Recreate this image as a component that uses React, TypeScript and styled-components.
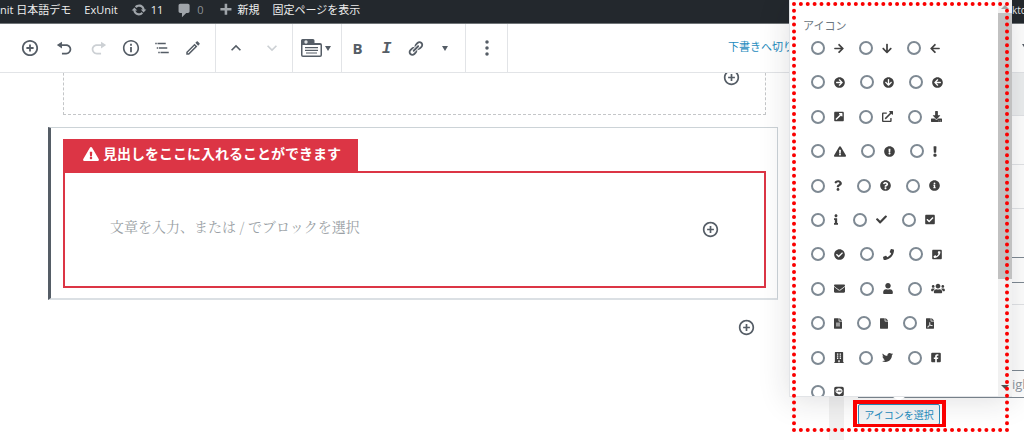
import React from "react";
import styled, { createGlobalStyle } from "styled-components";
import type { IconType } from "react-icons";
import {
  FaArrowRight, FaArrowDown, FaArrowLeft,
  FaArrowCircleRight, FaArrowCircleDown, FaArrowCircleLeft,
  FaExternalLinkSquareAlt, FaExternalLinkAlt, FaDownload,
  FaExclamationTriangle, FaExclamationCircle, FaExclamation,
  FaQuestion, FaQuestionCircle, FaInfoCircle,
  FaInfo, FaCheck, FaCheckSquare,
  FaCheckCircle, FaPhone, FaPhoneSquare,
  FaEnvelope, FaUser, FaUsers,
  FaFileAlt, FaFile, FaFilePdf,
  FaBuilding, FaTwitter, FaFacebookSquare,
  FaLine,
} from "react-icons/fa";

const GlobalStyle = createGlobalStyle`
  *, *::before, *::after { box-sizing: border-box; }
  body {
    margin: 0;
    background: #fff;
    color: #555d66;
    font-family: "Open Sans", "Noto Sans CJK JP", sans-serif;
    font-size: 11px;
    line-height: 16px;
  }
  button, input { font: inherit; color: inherit; }
  svg { display: block; flex: none; }
`;

const Page = styled.div`
  position: relative;
  display: flex;
  flex-direction: column;
  min-height: 100vh;
  overflow: hidden;
`;

/* ---- admin bar ---- */

const AdminBar = styled.nav`
  display: flex;
  align-items: center;
  gap: 13px;
  height: 24px;
  padding-bottom: 3px;
  background: #23282d;
  border-bottom: 1px solid #6f7477;
  white-space: nowrap;
`;

const AdminLink = styled.a<{ $muted?: boolean }>`
  display: flex;
  align-items: center;
  gap: 4px;
  color: ${(p) => (p.$muted ? "#8b9095" : "#eee")};
  text-decoration: none;
  svg { fill: #a0a5aa; }
`;

const AccountLink = styled(AdminLink)`
  width: 12px;
  margin-left: auto;
  font-size: 10px;
`;

/* ---- editor toolbar ---- */

const Toolbar = styled.header`
  display: flex;
  height: 49px;
  border-bottom: 1px solid #e2e4e7;
`;

const ToolGroup = styled.div<{ $pad: string }>`
  display: flex;
  align-items: center;
  padding: ${(p) => p.$pad};
  border-right: 1px solid #e2e4e7;
`;

const ToolButton = styled.button<{ $width: number }>`
  display: flex;
  align-items: center;
  justify-content: center;
  gap: 3px;
  width: ${(p) => p.$width}px;
  height: 36px;
  padding: 0;
  border: 0;
  background: none;
  color: #555d66;
  &:disabled { color: #ccd0d4; }
  svg { fill: currentColor; }
`;

const Bold = styled.span`
  font: 700 15px/20px "Open Sans", sans-serif;
`;

const Italic = styled.span`
  padding-top: 2px;
  font: italic 700 16px/20px "Liberation Mono", monospace;
`;

const ToolbarEnd = styled.div`
  display: flex;
  align-items: center;
  justify-content: space-between;
  flex: none;
  width: 296px;
  margin-left: auto;
  margin-right: -4px;
  padding-bottom: 3px;
  white-space: nowrap;
`;

const DraftLink = styled.a`
  margin-left: -4px;
  color: #1e8cbe;
  text-decoration: none;
`;

const Caret = styled.span`
  border: 3px solid transparent;
  border-top: 5px solid #555d66;
  border-bottom: 0;
`;

/* ---- canvas ---- */

const Main = styled.main`
  display: flex;
  flex: 1;
`;

const Canvas = styled.section`
  flex: 1;
  min-width: 0;
  padding: 0 51px 0 48px;
  overflow: hidden;
`;

const DashedBlock = styled.div`
  display: flex;
  justify-content: flex-end;
  align-items: flex-start;
  height: 62px;
  margin: -20px 12px 12px 15px;
  padding: 15px 25px 0 0;
  border: 1px dashed #c4c6c8;
`;

const InserterButton = styled.button`
  display: flex;
  flex: none;
  padding: 0;
  border: 0;
  background: none;
  color: #555d66;
  svg { fill: currentColor; }
`;

const SelectedBlock = styled.article`
  padding: 11px 11px 10px 12px;
  border: 1px solid #ccd3d7;
  border-left: 3px solid #555d66;
  border-bottom: 2px solid #dbe0e4;
`;

const BlockHeading = styled.h2`
  display: inline-flex;
  align-items: center;
  gap: 4px;
  height: 32px;
  margin: 0;
  padding: 0 17px 2px 20px;
  background: #dc3545;
  color: #fff;
  font-size: 14px;
  font-weight: 700;
  line-height: 20px;
  vertical-align: top;
  svg { width: 16px; height: 14px; }
`;

const BlockBody = styled.div`
  display: flex;
  align-items: center;
  height: 117px;
  padding: 0 45px;
  border: 2px solid #dc3545;
`;

const BlockInput = styled.input`
  flex: 1;
  min-width: 0;
  height: 24px;
  margin-bottom: 8px;
  padding: 0;
  border: 0;
  outline: 0;
  background: none;
  font-family: "Noto Serif CJK JP", "Noto Serif JP", "Liberation Serif", "Noto Sans CJK JP", serif;
  font-size: 14px;
  &::placeholder { color: #9a9fa5; opacity: 1; }
`;

const AppenderRow = styled.div`
  display: flex;
  align-items: center;
  justify-content: flex-end;
  height: 54px;
  padding-right: 23px;
`;

const CanvasScrollbar = styled.div`
  flex: none;
  width: 15px;
  background: #f1f1f1;
`;

/* ---- settings sidebar ---- */

const Sidebar = styled.aside`
  flex: none;
  width: 180px;
  overflow: hidden;
  background: #fff;
`;

const Panel = styled.div<{ $height: number; $header?: boolean }>`
  display: flex;
  flex-direction: column;
  justify-content: flex-end;
  height: ${(p) => p.$height}px;
  border-bottom: 1px solid #e2e4e7;
  background: ${(p) => (p.$header ? "#edeff0" : "#fff")};
`;

const SideInput = styled.input`
  width: 100%;
  height: 26px;
  margin: 0 0 21px 8px;
  padding: 0 0 0 160px;
  border: 1px solid #7e8993;
  background: #fff;
  font-size: 13px;
  color: #8d96a0;
`;

const IconPanel = styled.div`
  padding: 65px 0 15px 14px;
`;

const PositionInput = styled(SideInput)`
  display: block;
  height: 28px;
  margin: 0 0 6px;
  padding-left: 153px;
  border-right: 0;
`;

const PickButton = styled.button`
  display: block;
  width: 82px;
  height: 21px;
  padding: 0;
  border: 1px solid #2a8cba;
  border-radius: 2px;
  background: #f3f5f6;
  color: #1e8cbe;
  font-size: 10px;
  line-height: 18px;
  white-space: nowrap;
`;

/* ---- icon picker popover ---- */

const Popover = styled.div`
  position: absolute;
  top: 0;
  right: 12px;
  width: 223px;
  height: 397px;
  box-shadow: 0 3px 30px rgba(25, 30, 35, 0.14);
`;

const PopoverArrow = styled.span`
  position: absolute;
  top: 100%;
  left: 104px;
  border: 6px solid transparent;
  border-top: 4px solid #fff;
  border-bottom: 0;
`;

const PopoverBody = styled.div`
  display: flex;
  height: 100%;
  overflow: hidden;
  border: 1px solid #e2e4e7;
  border-top: 0;
  border-right: 0;
  background: #fff;
`;

const IconChoices = styled.fieldset`
  flex: 1;
  min-width: 0;
  margin: 0;
  padding: 18px 0 0 13px;
  border: 0;
`;

const Legend = styled.legend`
  float: left;
  width: 100%;
  padding: 0;
  color: #6c7781;
`;

const ChoiceRows = styled.div`
  clear: both;
  display: flex;
  flex-direction: column;
  justify-content: space-between;
  height: 365px;
  padding: 7px 0 0 8px;
`;

const ChoiceRow = styled.div`
  display: flex;
  gap: 15px;
`;

const Choice = styled.label<{ $glyph: number }>`
  display: flex;
  align-items: center;
  gap: 9px;
  svg { width: ${(p) => p.$glyph}px; height: 11px; fill: #404040; }
`;

const Radio = styled.input`
  appearance: none;
  width: 14px;
  height: 14px;
  margin: 0;
  border: 2px solid #7e8993;
  border-radius: 50%;
  background: #fff;
`;

const Scrollbar = styled.div`
  display: flex;
  flex: none;
  flex-direction: column;
  align-items: center;
  width: 14px;
  padding: 5px 0 7px;
  background: #f1f1f1;
`;

const ScrollArrow = styled.span<{ $down?: boolean }>`
  border: 4px solid transparent;
  ${(p) =>
    p.$down
      ? "border-top-color: #505050; border-bottom: 0; margin-top: auto;"
      : "border-bottom-color: #a3a3a3; border-top: 0;"}
`;

const ScrollThumb = styled.span`
  width: 100%;
  height: 266px;
  margin-top: 4px;
  background: #c1c1c1;
`;

/* ---- red call-outs drawn over the page ---- */

const DottedFrame = styled.svg`
  position: absolute;
  top: 0;
  right: 12px;
  pointer-events: none;
`;

const SolidFrame = styled.div`
  position: absolute;
  top: 400px;
  right: 78px;
  width: 93px;
  height: 27px;
  border: 4px solid #fa0000;
  border-bottom-width: 3px;
  pointer-events: none;
`;

const paths = {
  insert: "M10 1c-5 0-9 4-9 9s4 9 9 9 9-4 9-9-4-9-9-9zm0 16c-3.9 0-7-3.1-7-7s3.1-7 7-7 7 3.1 7 7-3.1 7-7 7zm1-11H9v3H6v2h3v3h2v-3h3V9h-3V6z",
  undo: "M12 5H7V2L1 6l6 4V7h5c2.2 0 4 1.8 4 4s-1.8 4-4 4H7v2h5c3.3 0 6-2.7 6-6s-2.7-6-6-6z",
  redo: "M8 5h5V2l6 4-6 4V7H8c-2.2 0-4 1.8-4 4s1.8 4 4 4h5v2H8c-3.3 0-6-2.7-6-6s2.7-6 6-6z",
  info: "M10 1c-5 0-9 4-9 9s4 9 9 9 9-4 9-9-4-9-9-9zm0 16.2c-4 0-7.2-3.200-7.200-7.200S6 2.800 10 2.800s7.200 3.200 7.200 7.200-3.200 7.200-7.200 7.200zM9 5.400h2v2H9zM9 8.800h2v5.800H9z",
  outline: "M5 5H3v2h2V5zm3 8h11v-2H8v2zm9-8H6v2h11V5zM7 11H5v2h2v-2zm0 8h2v-2H7v2zm3-2v2h11v-2H10z",
  pencil: "M14.06 9.02l.92.92L5.92 19H5v-.92l9.06-9.06M17.66 3c-.25 0-.51.1-.7.29l-1.83 1.83 3.75 3.75 1.83-1.83c.39-.39.39-1.02 0-1.41l-2.34-2.34c-.2-.2-.45-.29-.71-.29zm-3.6 3.19L3 17.25V21h3.75L17.81 9.94l-3.75-3.75z",
  up: "M12 8l-6 6 1.4 1.4 4.6-4.6 4.6 4.6L18 14z",
  down: "M12 16l-6-6 1.4-1.4 4.6 4.6 4.6-4.6L18 10z",
  link: "M17.74 2.76c1.68 1.69 1.68 4.41 0 6.1l-1.53 1.52c-1.12 1.12-2.7 1.47-4.14 1.09l2.62-2.61.76-.77.76-.76c.84-.84.84-2.2 0-3.04-.84-.85-2.2-.85-3.04 0l-.77.76-3.38 3.38c-.37-1.44-.02-3.02 1.1-4.14l1.52-1.53c1.69-1.68 4.42-1.68 6.1 0zM8.59 13.43l5.34-5.34c.42-.42.42-1.1 0-1.52-.44-.43-1.13-.39-1.53 0l-5.33 5.34c-.42.42-.42 1.1 0 1.52.44.43 1.13.39 1.52 0zm-.76 2.29l4.14-4.15c.38 1.44.03 3.02-1.09 4.14l-1.52 1.53c-1.69 1.68-4.41 1.68-6.1 0-1.68-1.68-1.68-4.42 0-6.1l1.53-1.52c1.12-1.12 2.7-1.47 4.14-1.1l-4.14 4.15c-.85.84-.85 2.2 0 3.05.84.84 2.2.84 3.04 0z",
  update: "M10.2 3.28c3.53 0 6.43 2.61 6.92 6h2.08l-3.5 4-3.5-4h2.32c-.45-1.97-2.21-3.45-4.32-3.45-1.45 0-2.73.71-3.54 1.78L4.95 5.66C6.23 4.2 8.11 3.28 10.2 3.28zm-.4 13.44c-3.52 0-6.43-2.61-6.92-6H.8l3.5-4c1.17 1.33 2.33 2.67 3.5 4H5.48c.45 1.97 2.21 3.45 4.32 3.45 1.45 0 2.73-.71 3.54-1.78l1.71 1.95c-1.28 1.46-3.15 2.38-5.25 2.38z",
  comment: "M5 2h9c1.1 0 2 .9 2 2v7c0 1.1-.9 2-2 2h-2l-5 5v-5H5c-1.1 0-2-.9-2-2V4c0-1.1.9-2 2-2z",
  plus: "M17 7v3h-5v5H9v-5H4V7h5V2h3v5h5z",
  more: "M12 2.8a2.1 2.1 0 1 0 0 4.2 2.1 2.1 0 0 0 0-4.2zm0 7.1a2.1 2.1 0 1 0 0 4.2 2.1 2.1 0 0 0 0-4.2zm0 7.1a2.1 2.1 0 1 0 0 4.2 2.1 2.1 0 0 0 0-4.2z",
};

type IconName = keyof typeof paths;

function Icon({ name, size = 18, box = 20 }: { name: IconName; size?: number; box?: number }) {
  return (
    <svg width={size} height={size} viewBox={`0 0 ${box} ${box}`} aria-hidden="true">
      <path d={paths[name]} />
    </svg>
  );
}

function BlockTypeIcon() {
  return (
    <svg width="21" height="18" viewBox="0 0 21 18" aria-hidden="true">
      <path d="M1.5 0H12a1.5 1.5 0 0 1 1.5 1.5V4H19a2 2 0 0 1 2 2v10a2 2 0 0 1-2 2H2a2 2 0 0 1-2-2V1.5A1.5 1.5 0 0 1 1.5 0z" />
      <rect x="1.5" y="6" width="18" height="10.5" rx="0.5" fill="#fff" />
      <circle cx="5" cy="3" r="1.7" fill="#dfe2e4" />
      <path d="M4 8h13v1.2H4zM4 10.7h13v1.2H4zM5 13.4h11v1.2H5z" />
    </svg>
  );
}

const Inserter = () => (
  <InserterButton type="button" aria-label="ブロックを追加">
    <Icon name="insert" size={17} />
  </InserterButton>
);

/* value, glyph, glyph width at 11px height */
const choices: [string, IconType, number][][] = [
  [["arrow-right", FaArrowRight, 10], ["arrow-down", FaArrowDown, 10], ["arrow-left", FaArrowLeft, 10]],
  [["circle-right", FaArrowCircleRight, 11], ["circle-down", FaArrowCircleDown, 11], ["circle-left", FaArrowCircleLeft, 11]],
  [["external-square", FaExternalLinkSquareAlt, 10], ["external", FaExternalLinkAlt, 11], ["download", FaDownload, 11]],
  [["warning", FaExclamationTriangle, 12], ["exclamation-circle", FaExclamationCircle, 11], ["exclamation", FaExclamation, 4]],
  [["question", FaQuestion, 8], ["question-circle", FaQuestionCircle, 11], ["info-circle", FaInfoCircle, 11]],
  [["info", FaInfo, 4], ["check", FaCheck, 11], ["check-square", FaCheckSquare, 10]],
  [["check-circle", FaCheckCircle, 11], ["phone", FaPhone, 11], ["phone-square", FaPhoneSquare, 10]],
  [["envelope", FaEnvelope, 11], ["user", FaUser, 10], ["users", FaUsers, 14]],
  [["file-alt", FaFileAlt, 8], ["file", FaFile, 8], ["file-pdf", FaFilePdf, 8]],
  [["building", FaBuilding, 10], ["twitter", FaTwitter, 11], ["facebook", FaFacebookSquare, 10]],
  [["line", FaLine, 10]],
];

export default function App() {
  return (
    <Page>
      <GlobalStyle />
      <AdminBar>
        <AdminLink href="#site">nit 日本語デモ</AdminLink>
        <AdminLink href="#exunit">ExUnit</AdminLink>
        <AdminLink href="#updates"><Icon name="update" size={16} />11</AdminLink>
        <AdminLink href="#comments" $muted><Icon name="comment" size={17} />0</AdminLink>
        <AdminLink href="#new"><Icon name="plus" size={17} />新規</AdminLink>
        <AdminLink href="#view">固定ページを表示</AdminLink>
        <AccountLink href="#account">kto</AccountLink>
      </AdminBar>

      <Toolbar>
        <ToolGroup $pad="0 7px 0 13px">
          <ToolButton type="button" $width={34} aria-label="追加"><Icon name="insert" /></ToolButton>
          <ToolButton type="button" $width={34} aria-label="元に戻す"><Icon name="undo" size={17} /></ToolButton>
          <ToolButton type="button" $width={34} aria-label="やり直す" disabled><Icon name="redo" size={17} /></ToolButton>
          <ToolButton type="button" $width={31} aria-label="情報"><Icon name="info" /></ToolButton>
          <ToolButton type="button" $width={31} aria-label="アウトライン"><Icon name="outline" size={18} box={24} /></ToolButton>
          <ToolButton type="button" $width={31} aria-label="編集"><Icon name="pencil" size={18} box={24} /></ToolButton>
        </ToolGroup>
        <ToolGroup $pad="0 2px">
          <ToolButton type="button" $width={36} aria-label="上へ"><Icon name="up" size={20} box={24} /></ToolButton>
          <ToolButton type="button" $width={36} aria-label="下へ" disabled><Icon name="down" size={20} box={24} /></ToolButton>
        </ToolGroup>
        <ToolGroup $pad="0 2px 0 0">
          <ToolButton type="button" $width={46} aria-label="ブロックタイプ"><BlockTypeIcon /><Caret /></ToolButton>
        </ToolGroup>
        <ToolGroup $pad="0 6px 0 1px">
          <ToolButton type="button" $width={29}><Bold>B</Bold></ToolButton>
          <ToolButton type="button" $width={29}><Italic>I</Italic></ToolButton>
          <ToolButton type="button" $width={29} aria-label="リンク"><Icon name="link" size={17} /></ToolButton>
          <ToolButton type="button" $width={29} aria-label="その他の書式"><Caret /></ToolButton>
        </ToolGroup>
        <ToolGroup $pad="0 3px">
          <ToolButton type="button" $width={35} aria-label="詳細設定"><Icon name="more" size={20} box={24} /></ToolButton>
        </ToolGroup>
        <ToolbarEnd>
          <DraftLink href="#draft">下書きへ切り替え</DraftLink>
          <Caret />
        </ToolbarEnd>
      </Toolbar>

      <Main>
        <Canvas>
          <DashedBlock><Inserter /></DashedBlock>
          <SelectedBlock>
            <BlockHeading><FaExclamationTriangle />見出しをここに入れることができます</BlockHeading>
            <BlockBody>
              <BlockInput aria-label="ブロック" placeholder="文章を入力、または / でブロックを選択" />
              <Inserter />
            </BlockBody>
          </SelectedBlock>
          <AppenderRow><Inserter /></AppenderRow>
        </Canvas>
        <CanvasScrollbar />
        <Sidebar>
          <Panel $height={43} $header />
          <Panel $height={49} />
          <Panel $height={44} />
          <Panel $height={96}><SideInput aria-label="値" /></Panel>
          <IconPanel>
            <PositionInput aria-label="位置" defaultValue="igh" />
            <PickButton type="button">アイコンを選択</PickButton>
          </IconPanel>
        </Sidebar>
      </Main>

      <Popover role="dialog" aria-label="アイコン">
        <PopoverBody>
          <IconChoices>
            <Legend>アイコン</Legend>
            <ChoiceRows>
              {choices.map((row) => (
                <ChoiceRow key={row[0][0]}>
                  {row.map(([id, Glyph, width]) => (
                    <Choice key={id} $glyph={width}>
                      <Radio type="radio" name="icon" value={id} aria-label={id} />
                      <Glyph preserveAspectRatio="xMidYMid meet" />
                    </Choice>
                  ))}
                </ChoiceRow>
              ))}
            </ChoiceRows>
          </IconChoices>
          <Scrollbar>
            <ScrollArrow />
            <ScrollThumb />
            <ScrollArrow $down />
          </Scrollbar>
        </PopoverBody>
        <PopoverArrow />
      </Popover>

      <DottedFrame width="223" height="436" viewBox="0 0 223 436" aria-hidden="true">
        <rect x="5" y="4" width="213" height="426" fill="none" stroke="#fa0000" strokeWidth="4"
          strokeLinecap="round" pathLength="186" strokeDasharray="0 1" />
      </DottedFrame>
      <SolidFrame />
    </Page>
  );
}
